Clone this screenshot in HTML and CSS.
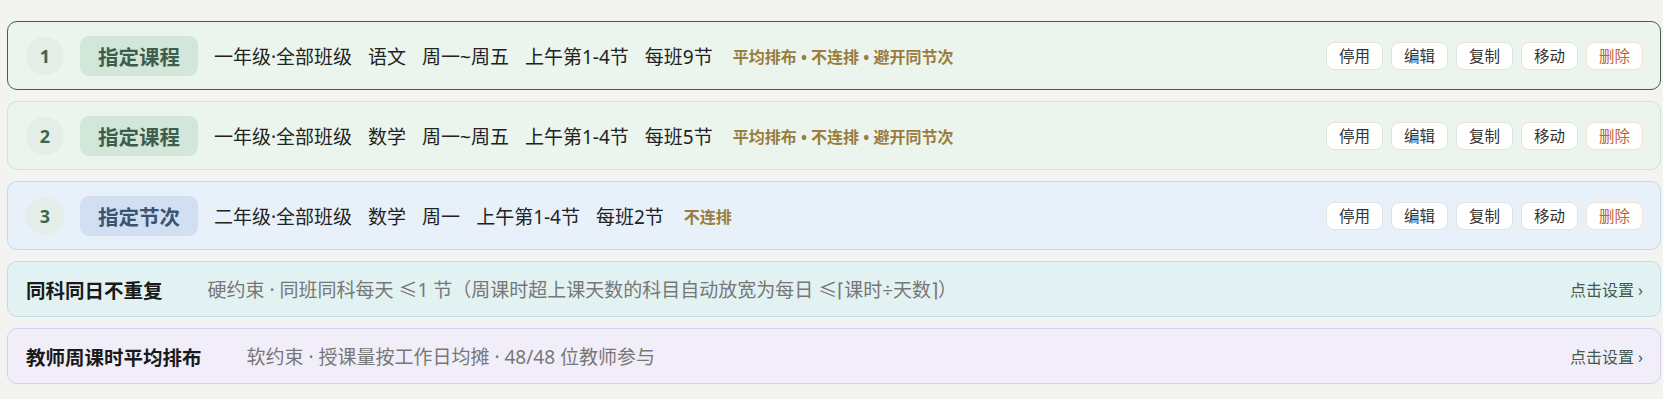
FILE: index.html
```html
<!DOCTYPE html>
<html lang="zh-CN">
    <head>
        <meta charset="utf-8">
        <title>排课规则</title>

        <link rel="stylesheet" href="styles.css">
    </head>
    <body>
        <div class="ruleList">

            <div class="ruleCard green active">
                <span class="num">1</span>
                <span class="tag">指定课程</span>
                <div class="meta">
                    <span>一年级·全部班级</span>
                    <span>语文</span>
                    <span>周一~周五</span>
                    <span>上午第1-4节</span>
                    <span>每班9节</span>
                </div>
                <span class="opts">平均排布 • 不连排 • 避开同节次</span>
                <div class="actions">
                    <button class="btn">停用</button>
                    <button class="btn">编辑</button>
                    <button class="btn">复制</button>
                    <button class="btn">移动</button>
                    <button class="btn danger">删除</button>
                </div>
            </div>

            <div class="ruleCard green">
                <span class="num">2</span>
                <span class="tag">指定课程</span>
                <div class="meta">
                    <span>一年级·全部班级</span>
                    <span>数学</span>
                    <span>周一~周五</span>
                    <span>上午第1-4节</span>
                    <span>每班5节</span>
                </div>
                <span class="opts">平均排布 • 不连排 • 避开同节次</span>
                <div class="actions">
                    <button class="btn">停用</button>
                    <button class="btn">编辑</button>
                    <button class="btn">复制</button>
                    <button class="btn">移动</button>
                    <button class="btn danger">删除</button>
                </div>
            </div>

            <div class="ruleCard blue">
                <span class="num">3</span>
                <span class="tag">指定节次</span>
                <div class="meta">
                    <span>二年级·全部班级</span>
                    <span>数学</span>
                    <span>周一</span>
                    <span>上午第1-4节</span>
                    <span>每班2节</span>
                </div>
                <span class="opts">不连排</span>
                <div class="actions">
                    <button class="btn">停用</button>
                    <button class="btn">编辑</button>
                    <button class="btn">复制</button>
                    <button class="btn">移动</button>
                    <button class="btn danger">删除</button>
                </div>
            </div>

            <div class="globalCard teal">
                <span class="title">同科同日不重复</span>
                <span class="desc">硬约束 · 同班同科每天 ≤1 节（周课时超上课天数的科目自动放宽为每日 ≤⌈课时÷天数⌉）</span>
                <a class="setup">点击设置 ›</a>
            </div>

            <div class="globalCard lilac">
                <span class="title">教师周课时平均排布</span>
                <span class="desc">软约束 · 授课量按工作日均摊 · 48/48 位教师参与</span>
                <a class="setup">点击设置 ›</a>
            </div>

        </div>
    </body>
</html>
```

FILE: styles.css
```css
body {
    margin: 0;
    padding: 21px 2px 0 7px;
    background-color: #f3f3f1;
    font-family: "Noto Sans", "Noto Sans CJK SC", sans-serif;
    color: #222;
}

.ruleList {
    display: flex;
    flex-direction: column;
    gap: 11px;
}

/* numbered rule rows */
.ruleCard {
    display: flex;
    align-items: center;
    height: 69px;
    box-sizing: border-box;
    padding: 0 17px 0 18px;
    border: 1px solid #cfe3d6;
    border-radius: 10px;
}

.ruleCard.green {
    background-color: #ebf5ee;
}

.ruleCard.blue {
    background-color: #e8f0fa;
    border-color: #c6d7ee;
}

.ruleCard.active {
    border-color: #3f5f50;
}

.num {
    width: 38px;
    height: 38px;
    border-radius: 50%;
    background-color: #e4eee8;
    color: #3d6650;
    font-size: 18px;
    font-weight: bold;
    display: flex;
    align-items: center;
    justify-content: center;
    flex-shrink: 0;
}

.tag {
    margin-left: 16px;
    height: 40px;
    padding: 0 18px;
    border-radius: 9px;
    background-color: #d3e6da;
    color: #3e5e4c;
    font-size: 20.5px;
    font-weight: bold;
    display: flex;
    align-items: center;
}

.blue .tag {
    background-color: #d2dff2;
    color: #3b5470;
}

.meta {
    display: flex;
    gap: 16px;
    margin-left: 16px;
    font-size: 19px;
    color: #222;
}

.opts {
    margin-left: 20px;
    font-size: 16px;
    font-weight: bold;
    color: #9a7d3c;
}

.actions {
    margin-left: auto;
    display: flex;
    gap: 8px;
}

.btn {
    height: 28px;
    padding: 0 12px;
    background-color: #fff;
    border: 1px solid #e2e2e0;
    border-radius: 8px;
    font-family: inherit;
    font-size: 15.5px;
    color: #333;
    cursor: pointer;
}

.btn.danger {
    color: #c0603a;
    border-color: #f1e2da;
}

/* global constraint rows */
.globalCard {
    display: flex;
    align-items: center;
    height: 56px;
    box-sizing: border-box;
    padding: 0 17px 0 18px;
    border: 1px solid #bfe0e2;
    border-radius: 10px;
}

.globalCard.teal {
    background-color: #e2f1f1;
}

.globalCard.lilac {
    background-color: #f1eef9;
    border-color: #d8cfee;
}

.title {
    font-size: 19.5px;
    font-weight: bold;
    color: #1a1a1a;
}

.desc {
    margin-left: 45px;
    font-size: 19px;
    color: #777;
}

.setup {
    margin-left: auto;
    font-size: 16px;
    color: #3f5a4e;
    cursor: pointer;
}
```
